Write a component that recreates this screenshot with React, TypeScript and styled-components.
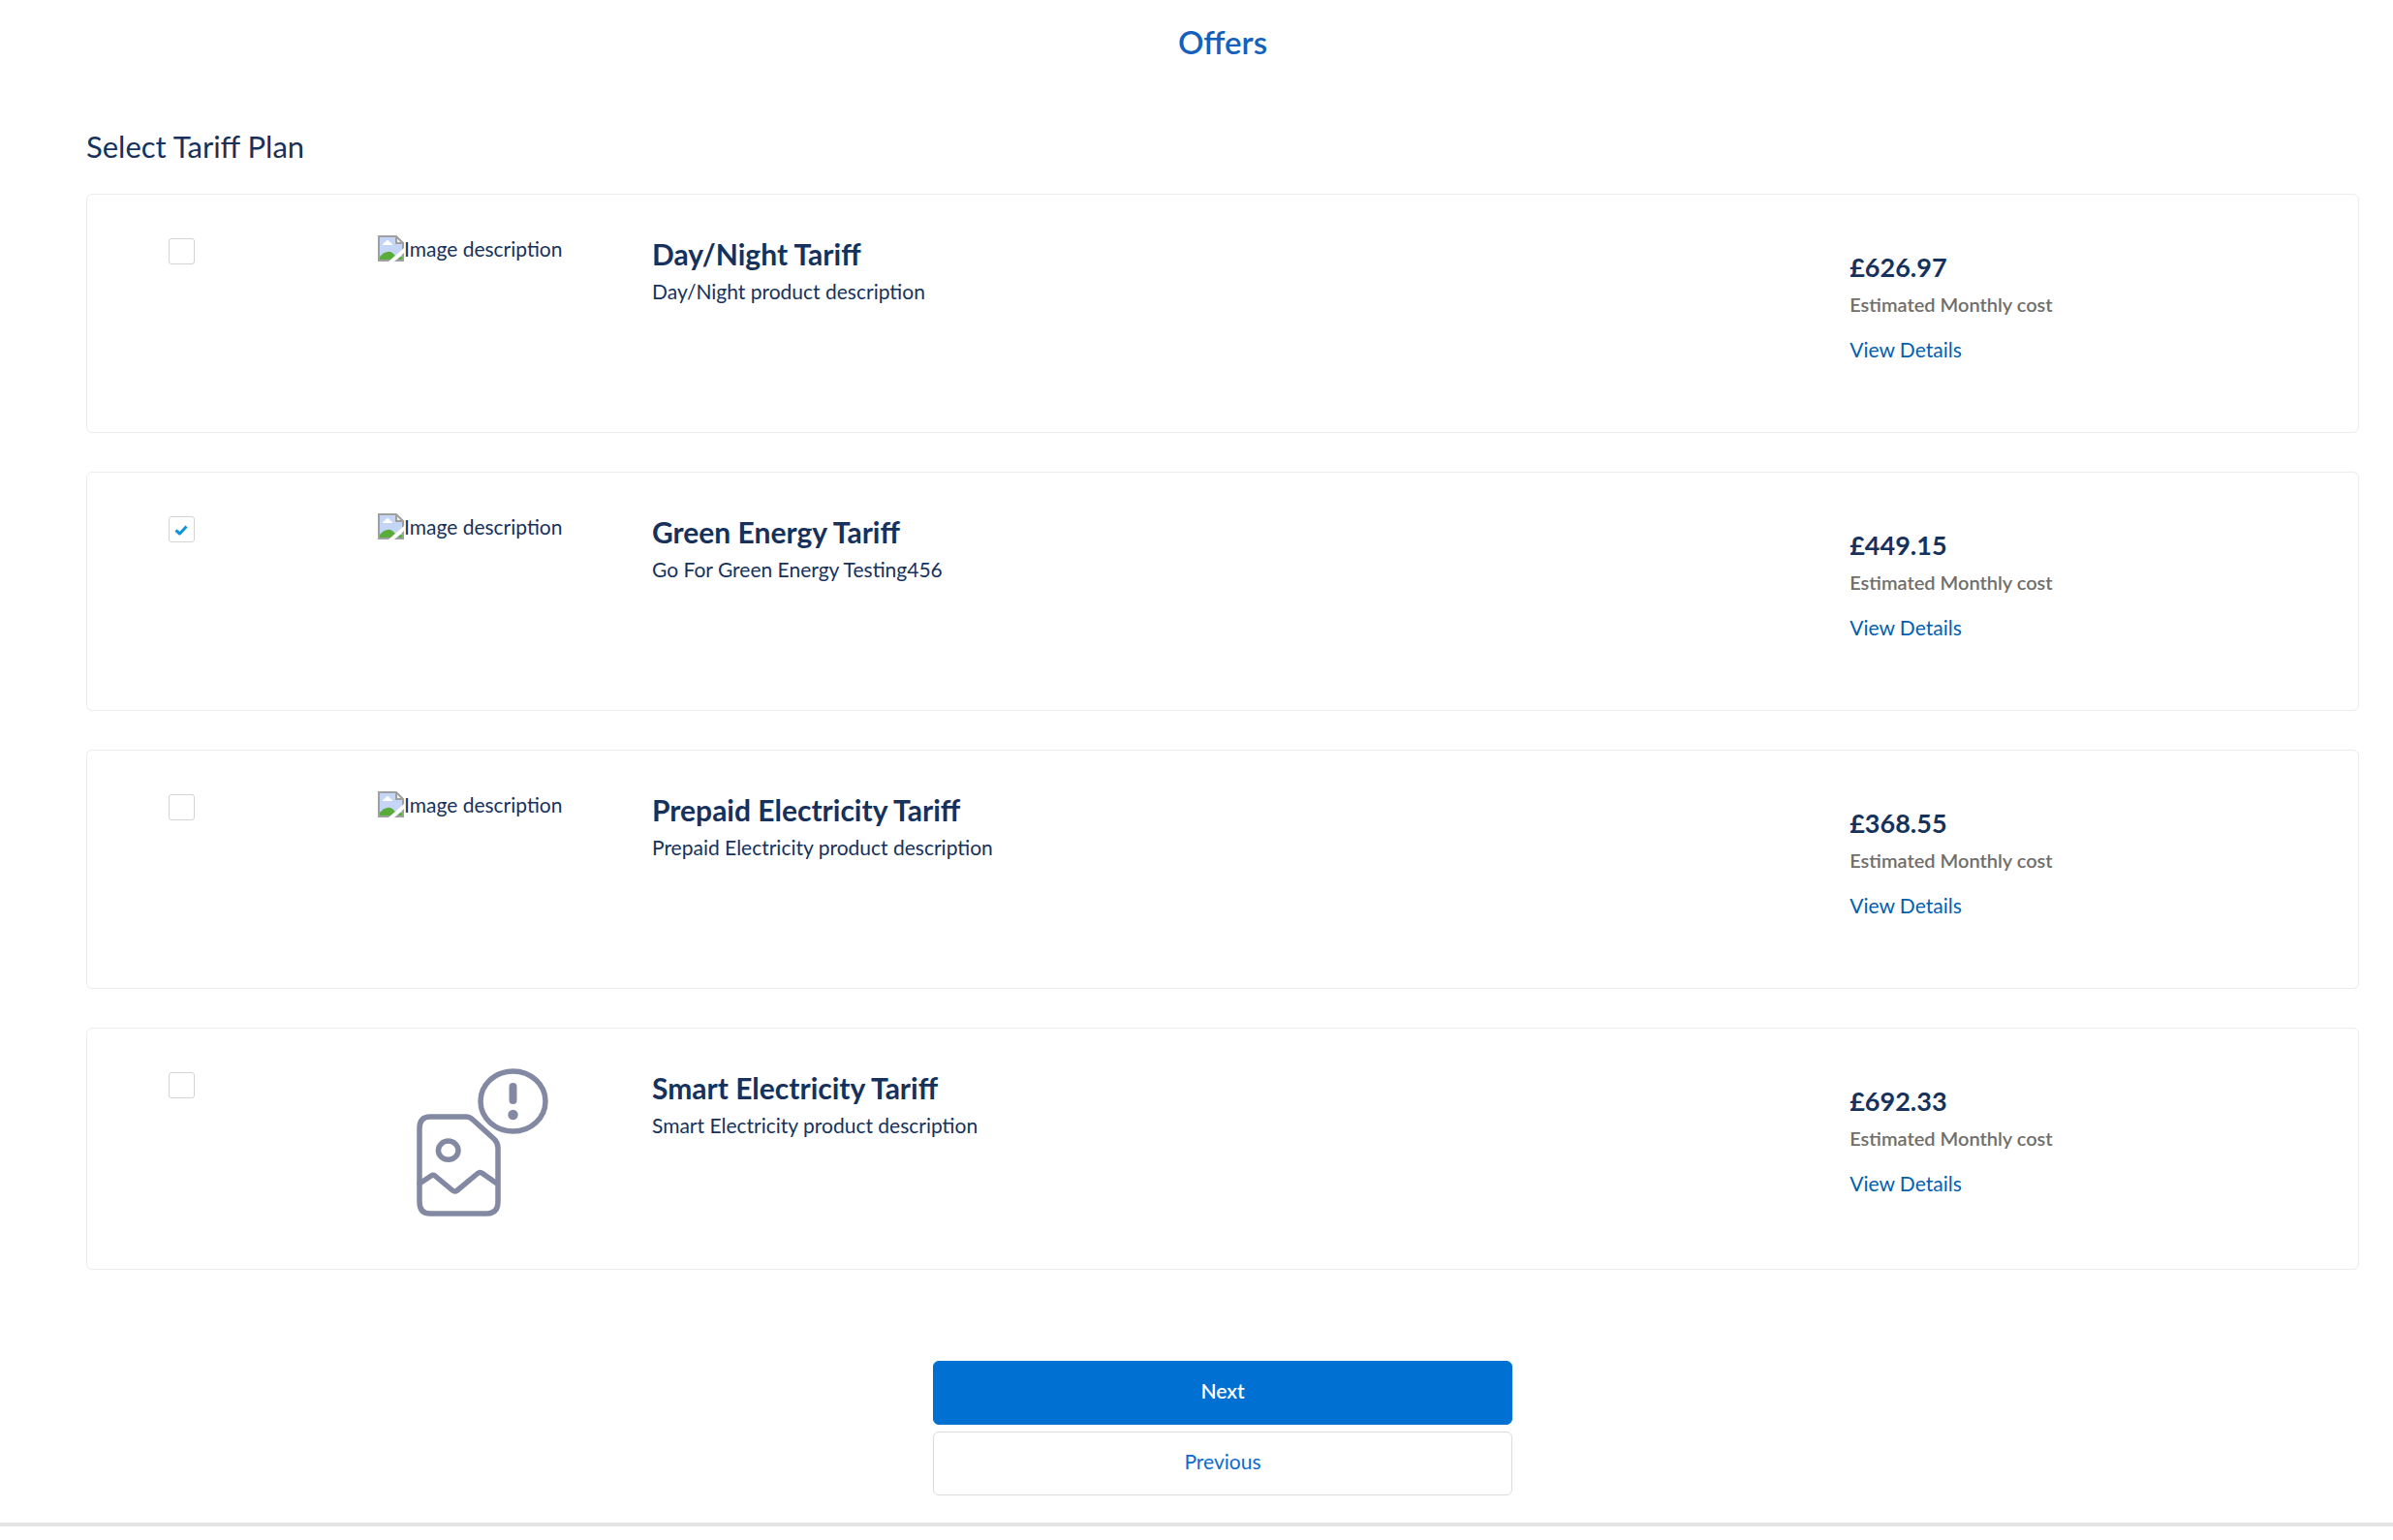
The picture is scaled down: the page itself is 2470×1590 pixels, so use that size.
import React, { useState } from "react";
import styled, { createGlobalStyle } from "styled-components";

const GlobalStyle = createGlobalStyle`
  *, *::before, *::after { box-sizing: border-box; }
  body {
    margin: 0;
    background: #ffffff;
    color: #16325c;
    font-family: Lato, "Open Sans", sans-serif;
    font-size: 21px;
    line-height: 30px;
  }
`;

const Page = styled.main`
  padding: 23px 35px 28px 89px;
  border-bottom: 4px solid #e3e3e3;
`;

const PageTitle = styled.h1`
  margin: 0 0 68px;
  color: #1461bd;
  font-size: 33px;
  font-weight: 600;
  line-height: 40px;
  text-align: center;
`;

const SectionTitle = styled.h2`
  margin: 0 0 29px;
  font-size: 31px;
  font-weight: 400;
  line-height: 40px;
`;

const PlanList = styled.ul`
  display: flex;
  flex-direction: column;
  gap: 40px;
  margin: 0;
  padding: 0;
  list-style: none;
`;

const PlanCard = styled.li`
  display: grid;
  grid-template-columns: 216px 283px minmax(0, 57fr) minmax(0, 23fr);
  align-items: start;
  min-height: 247px;
  padding: 42px 26px 40px 84px;
  border: 1px solid #ececec;
  border-radius: 6px;
`;

const TickLabel = styled.label`
  display: grid;
  width: 27px;
  height: 27px;
  margin-top: 3px;
  cursor: pointer;

  > * {
    grid-area: 1 / 1;
  }
`;

const TickInput = styled.input`
  width: 27px;
  height: 27px;
  margin: 0;
  appearance: none;
  background: #ffffff;
  border: 1px solid #d4d4d4;
  border-radius: 3px;
  cursor: pointer;
`;

const TickMark = styled.svg`
  width: 27px;
  height: 27px;
  pointer-events: none;
`;

const MissingImage = styled.div`
  display: flex;
  line-height: 27px;
  white-space: nowrap;

  svg {
    flex: none;
    width: 27px;
    height: 27px;
  }
`;

const Placeholder = styled.svg`
  display: block;
  width: 137px;
  height: 166px;
  margin-left: 40px;
  overflow: visible;
`;

const Details = styled.div`
  display: flex;
  flex-direction: column;
  gap: 6px;
  padding-top: 1px;
`;

const PlanName = styled.h3`
  margin: 0;
  font-size: 30px;
  font-weight: 700;
  line-height: 36px;
`;

const Text = styled.p`
  margin: 0;
`;

const Cost = styled.div`
  display: flex;
  flex-direction: column;
  align-items: flex-start;
  gap: 6px;
  padding-top: 15px;
`;

const Price = styled.strong`
  font-size: 27px;
  font-weight: 700;
  line-height: 36px;
`;

const CostNote = styled.span`
  color: #706e6b;
  font-size: 20px;
  font-weight: 600;
  line-height: 28px;
`;

const DetailsLink = styled.a`
  margin-top: 12px;
  color: #005fb2;
  text-decoration: none;
`;

const Actions = styled.div`
  display: flex;
  flex-direction: column;
  gap: 7px;
  width: 100%;
  max-width: 598px;
  margin: 94px auto 0;
`;

const ActionButton = styled.button<{ $primary?: boolean }>`
  height: 66px;
  padding: 0 0 4px;
  border: 1px solid ${(p) => (p.$primary ? "#0070d2" : "#dddbda")};
  border-radius: 6px;
  background: ${(p) => (p.$primary ? "#0070d2" : "#ffffff")};
  color: ${(p) => (p.$primary ? "#ffffff" : "#0b6bd0")};
  font-family: inherit;
  font-size: 21px;
  font-weight: ${(p) => (p.$primary ? 600 : 400)};
  line-height: 30px;
  cursor: pointer;
`;

const BrokenImageIcon = () => (
  <svg viewBox="0 0 27 27" aria-hidden="true">
    <path d="M1 1H19L26 8V26H1Z" fill="#c5d5f5" />
    <path d="M5 10Q5 7.500 7.500 7.500Q8 5 10 5Q12 5 12.500 7.500Q15 7.500 15 10Z" fill="#ffffff" />
    <path d="M1 26V23Q9 14 15 18L19 22L15 26Z" fill="#5aac3a" />
    <path d="M19 26Q22 22 26 21V26Z" fill="#5aac3a" />
    <path d="M19 1V8H26Z" fill="#f4f4f4" />
    <path d="M1 1H19L26 8V26H1ZM19 1V8H26" fill="none" stroke="#a0a0a0" strokeWidth="2" />
    <path d="M27 13V18L17 27H11Z" fill="#ffffff" />
  </svg>
);

const PlaceholderImage = () => (
  <Placeholder viewBox="0 1 137 166" role="img" aria-label="No image available">
    <g fill="none" stroke="#8489a3" strokeWidth="5.500" strokeLinejoin="round" strokeLinecap="round">
      <ellipse cx="99.500" cy="34" rx="33.500" ry="31" />
      <path d="M14 50H51Q55 50 58 53L80 73Q84 77 84 82V138Q84 150 72 150H14Q3 150 3 138V62Q3 50 14 50Z" />
      <ellipse cx="32.700" cy="84.700" rx="10.300" ry="9.600" />
      <path d="M3 119L15 111Q17 109.500 19 111L37 126Q39.500 128 42 126L63 108.500Q65.500 106.500 68 108.500L83 119" />
      <path d="M99.500 19V33" strokeWidth="8" />
    </g>
    <circle cx="99.500" cy="48" r="5.200" fill="#8489a3" />
  </Placeholder>
);

type Plan = {
  id: string;
  name: string;
  description: string;
  price: string;
  placeholder?: boolean;
};

const plans: Plan[] = [
  { id: "day-night", name: "Day/Night Tariff", description: "Day/Night product description", price: "£626.97" },
  { id: "green", name: "Green Energy Tariff", description: "Go For Green Energy Testing456", price: "£449.15" },
  { id: "prepaid", name: "Prepaid Electricity Tariff", description: "Prepaid Electricity product description", price: "£368.55" },
  { id: "smart", name: "Smart Electricity Tariff", description: "Smart Electricity product description", price: "£692.33", placeholder: true },
];

export default function App() {
  const [selected, setSelected] = useState("green");

  return (
    <>
      <GlobalStyle />
      <Page>
        <PageTitle>Offers</PageTitle>
        <SectionTitle>Select Tariff Plan</SectionTitle>
        <PlanList>
          {plans.map((plan) => (
            <PlanCard key={plan.id}>
              <TickLabel htmlFor={plan.id}>
                <TickInput
                  id={plan.id}
                  type="checkbox"
                  aria-label={plan.name}
                  checked={selected === plan.id}
                  onChange={() => setSelected(selected === plan.id ? "" : plan.id)}
                />
                {selected === plan.id && (
                  <TickMark viewBox="0 0 27 27" aria-hidden="true">
                    <path d="M7.500 14.500L11.500 18L18.500 10.500" fill="none" stroke="#0d94dc" strokeWidth="3" strokeLinejoin="round" />
                  </TickMark>
                )}
              </TickLabel>
              {plan.placeholder ? (
                <PlaceholderImage />
              ) : (
                <MissingImage>
                  <BrokenImageIcon />
                  Image description
                </MissingImage>
              )}
              <Details>
                <PlanName>{plan.name}</PlanName>
                <Text>{plan.description}</Text>
              </Details>
              <Cost>
                <Price>{plan.price}</Price>
                <CostNote>Estimated Monthly cost</CostNote>
                <DetailsLink href="#details">View Details</DetailsLink>
              </Cost>
            </PlanCard>
          ))}
        </PlanList>
        <Actions>
          <ActionButton type="button" $primary>Next</ActionButton>
          <ActionButton type="button">Previous</ActionButton>
        </Actions>
      </Page>
    </>
  );
}
